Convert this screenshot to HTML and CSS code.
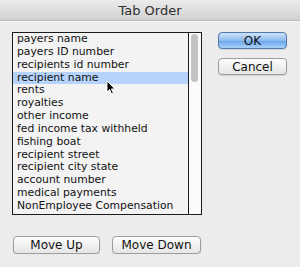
FILE: index.html
```html
<!DOCTYPE html>
<html lang="en">
<head>
    <meta charset="UTF-8">
    <meta name="viewport" content="width=device-width, initial-scale=1.0">
    <title>Tab Order</title>
    <link rel="stylesheet" href="styles.css">
</head>
<body>
    <div class="titlebar">Tab Order</div>

    <div class="dialog">
        <div class="top">
            <div class="listbox">
                <ul class="items">
                    <li>payers name</li>
                    <li>payers ID number</li>
                    <li>recipients id number</li>
                    <li class="selected">recipient name</li>
                    <li>rents</li>
                    <li>royalties</li>
                    <li>other income</li>
                    <li>fed income tax withheld</li>
                    <li>fishing boat</li>
                    <li>recipient street</li>
                    <li>recipient city state</li>
                    <li>account number</li>
                    <li>medical payments</li>
                    <li>NonEmployee Compensation</li>
                </ul>
                <div class="scrollbar"><div class="thumb"></div></div>
                <svg class="cursor" width="10" height="15" viewBox="0 0 10 15">
                    <path d="M1 1 L1 12 L3.6 9.6 L5.6 14 L7.4 13.2 L5.4 8.9 L8.8 8.9 Z" fill="#000" stroke="#fff" stroke-width="0.9"/>
                </svg>
            </div>
            <div class="side">
                <button class="btn primary">OK</button>
                <button class="btn">Cancel</button>
            </div>
        </div>

        <div class="bottom">
            <button class="btn up">Move Up</button>
            <button class="btn down">Move Down</button>
        </div>
    </div>
</body>
</html>
```

FILE: styles.css
```css
body {
    margin: 0;
    padding: 0;
    background-color: #ececec;
    font-family: "DejaVu Sans", sans-serif;
    color: #111;
}

.titlebar {
    height: 20px;
    line-height: 21px;
    text-align: center;
    font-size: 13px;
    color: #2e2e2e;
    background: linear-gradient(#ebebeb, #d2d2d2);
    border-bottom: 1px solid #b8b8b8;
    box-shadow: 0 1px 0 #f6f6f6;
}

.dialog {
    padding: 11px 0 0 12px;
}

.top {
    display: flex;
    align-items: flex-start;
}

.listbox {
    position: relative;
    display: flex;
    width: 188px;
    height: 181px;
    border: 1px solid #1c1c1c;
    background: #f3f3f3;
}

.items {
    list-style: none;
    margin: 0;
    padding: 0;
    width: 175px;
    border-right: 1px solid #1c1c1c;
}

.items li {
    height: 12.85px;
    line-height: 12.85px;
    padding-left: 4px;
    font-size: 10.8px;
    white-space: nowrap;
}

.items li.selected {
    background-color: #b6d4fb;
}

.scrollbar {
    flex: 1;
    background: #fbfbfb;
    padding: 1px 3px 0 2px;
}

.thumb {
    height: 48px;
    border-radius: 4px;
    background: #c3c3c3;
}

.cursor {
    position: absolute;
    left: 93px;
    top: 47px;
}

.side {
    display: flex;
    flex-direction: column;
    gap: 9px;
    margin-left: 16px;
}

.btn {
    font-family: "DejaVu Sans", sans-serif;
    font-size: 12px;
    color: #111;
    padding: 0;
    height: 17px;
    border: 1px solid #9c9c9c;
    border-radius: 4px;
    background: linear-gradient(#ffffff, #f0f0f0 50%, #e6e6e6);
    box-shadow: 0 1px 1px rgba(0, 0, 0, 0.12);
}

.side .btn {
    width: 69px;
}

.btn.primary {
    border-color: #4f78ad;
    background: linear-gradient(#cfe2f9, #8fbcef 50%, #6ea7eb 55%, #a8d0f8);
}

.bottom {
    display: flex;
    gap: 12px;
    padding-top: 21px;
    padding-left: 1px;
}

.btn.up {
    width: 87px;
    height: 18px;
}

.btn.down {
    width: 89px;
    height: 18px;
}
```
